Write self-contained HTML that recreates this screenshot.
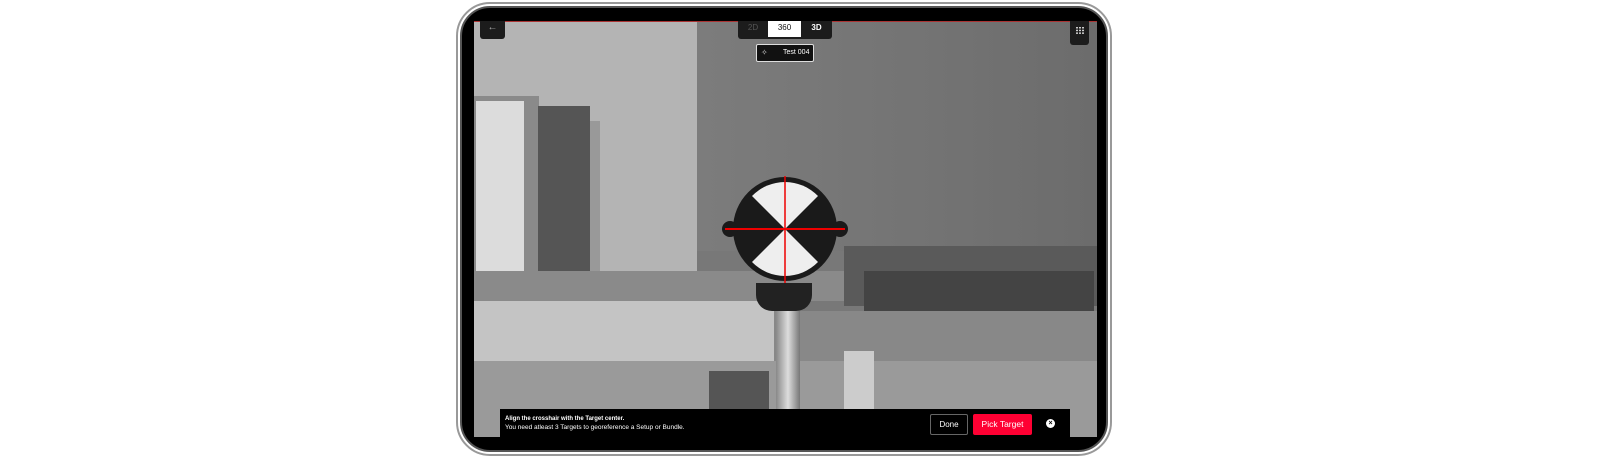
<!DOCTYPE html>
<html><head><style>
body{margin:0;width:1600px;height:465px;background:#fff;position:relative;overflow:hidden;font-family:"Liberation Sans",sans-serif}
div{position:absolute;box-sizing:border-box}
</style></head><body>
<div style="left:456px;top:2px;width:656px;height:454px;border-radius:34px;border:2px solid #999;background:#fff"></div>
<div style="left:460px;top:6px;width:648px;height:446px;border-radius:30px;border:2px solid #555;background:#000"></div>
<div style="left:474px;top:21px;width:623px;height:416px;overflow:hidden;background:#787878">
 <div style="left:0;top:0;width:223px;height:260px;background:#b4b4b4"></div>
 <div style="left:223px;top:0;width:400px;height:230px;background:linear-gradient(90deg,#7c7c7c,#737373 60%,#6c6c6c)"></div>
 <div style="left:0;top:75px;width:65px;height:180px;background:#8a8a8a"></div>
 <div style="left:2px;top:80px;width:48px;height:170px;background:#dcdcdc"></div>
 <div style="left:64px;top:85px;width:52px;height:170px;background:#555"></div>
 <div style="left:116px;top:100px;width:10px;height:150px;background:#999"></div>
 <div style="left:0;top:250px;width:623px;height:30px;background:#8a8a8a"></div>
 <div style="left:370px;top:225px;width:253px;height:60px;background:#5a5a5a"></div>
 <div style="left:390px;top:250px;width:230px;height:40px;background:#444"></div>
 <div style="left:0;top:280px;width:300px;height:60px;background:#c4c4c4"></div>
 <div style="left:300px;top:290px;width:323px;height:60px;background:#888"></div>
 <div style="left:0;top:340px;width:623px;height:76px;background:#9a9a9a"></div>
 <div style="left:235px;top:350px;width:60px;height:66px;background:#555"></div>
 <div style="left:370px;top:330px;width:30px;height:86px;background:#ccc"></div>
 <div style="left:302px;top:285px;width:24px;height:131px;background:linear-gradient(90deg,#888,#ddd,#777)"></div>
 <div style="left:282px;top:262px;width:56px;height:28px;background:#222;border-radius:0 0 16px 16px"></div>
 <svg style="position:absolute;left:240px;top:150px" width="140" height="120" viewBox="0 0 140 120">
  <circle cx="71" cy="58" r="52" fill="#1a1a1a"/>
  <circle cx="16" cy="58" r="8" fill="#1a1a1a"/><circle cx="126" cy="58" r="8" fill="#1a1a1a"/>
  <path d="M71 58 L38 25 A46 46 0 0 1 104 25 Z" fill="#eee"/>
  <path d="M71 58 L38 91 A46 46 0 0 0 104 91 Z" fill="#eee"/>
  <line x1="11" y1="58" x2="131" y2="58" stroke="#e00" stroke-width="2"/>
  <line x1="71" y1="5" x2="71" y2="112" stroke="#e00" stroke-width="1.5"/>
 </svg>
</div>
<div style="left:474px;top:21px;width:623px;height:1px;background:#a33"></div>
<div style="left:480px;top:21px;width:25px;height:18px;background:#1c1c1c;border-radius:0 0 3px 3px;color:#aaa;font-size:10px;text-align:center;line-height:14px">←</div>
<div style="left:738px;top:21px;width:94px;height:18px;background:#1c1c1c;border-radius:0 0 3px 3px"></div>
<div style="left:738px;top:21px;width:30px;height:18px;color:#555;font-size:8px;text-align:center;line-height:14px">2D</div>
<div style="left:768px;top:21px;width:33px;height:16px;background:#fff;color:#111;font-size:8px;text-align:center;line-height:13px">360</div>
<div style="left:801px;top:21px;width:31px;height:18px;color:#fff;font-size:8px;font-weight:bold;text-align:center;line-height:14px">3D</div>
<div style="left:756px;top:44px;width:58px;height:18px;background:#111;border:1px solid #ddd;border-radius:2px;color:#fff;font-size:7px;line-height:15px;padding-left:26px">Test 004</div>
<div style="left:761px;top:48px;color:#ccc;font-size:8px">✧</div>
<div style="left:1070px;top:21px;width:19px;height:24px;background:#1c1c1c;border-radius:0 0 3px 3px"></div>
<svg style="position:absolute;left:1076px;top:27px" width="8" height="7"><g fill="#ccc"><rect x="0" y="0" width="2" height="1.5"/><rect x="3" y="0" width="2" height="1.5"/><rect x="6" y="0" width="2" height="1.5"/><rect x="0" y="2.7" width="2" height="1.5"/><rect x="3" y="2.7" width="2" height="1.5"/><rect x="6" y="2.7" width="2" height="1.5"/><rect x="0" y="5.4" width="2" height="1.5"/><rect x="3" y="5.4" width="2" height="1.5"/><rect x="6" y="5.4" width="2" height="1.5"/></g></svg>
<div style="left:500px;top:409px;width:570px;height:28px;background:#000"></div>
<div style="left:505px;top:416px;color:#fff;font-size:6px;font-weight:bold">Align the crosshair with the Target center.</div>
<div style="left:505px;top:424px;color:#fff;font-size:6.5px">You need atleast 3 Targets to georeference a Setup or Bundle.</div>
<div style="left:930px;top:414px;width:38px;height:21px;border:1px solid #666;border-radius:2px;color:#fff;font-size:8px;text-align:center;line-height:19px">Done</div>
<div style="left:973px;top:414px;width:59px;height:21px;background:#ff0033;border-radius:2px;color:#fff;font-size:8.5px;text-align:center;line-height:21px">Pick Target</div>
<div style="left:1046px;top:419px;width:9px;height:9px;border-radius:50%;background:#fff;color:#000;font-size:7px;text-align:center;line-height:9px;font-weight:bold">×</div>
</body></html>
